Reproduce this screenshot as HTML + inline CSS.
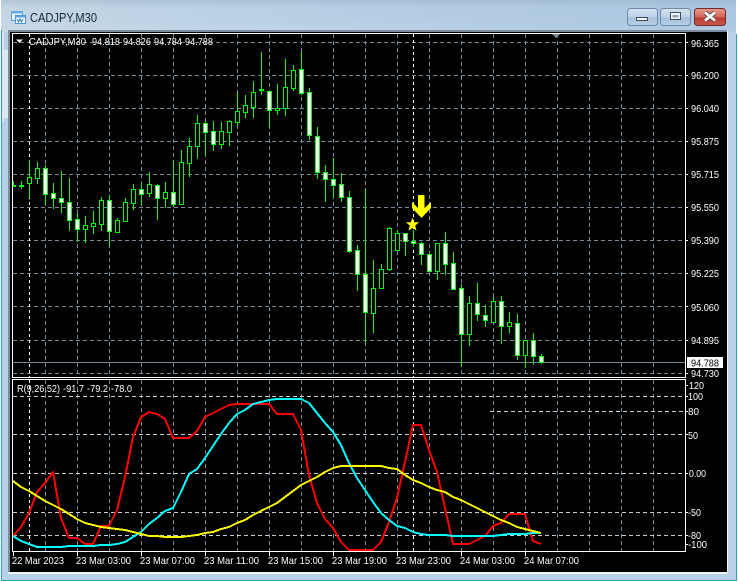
<!DOCTYPE html>
<html><head><meta charset="utf-8"><title>CADJPY,M30</title>
<style>
html,body{margin:0;padding:0;background:#fff;width:738px;height:582px;overflow:hidden}
svg{position:absolute;left:0;top:0;display:block}
text{font-family:"Liberation Sans",sans-serif;font-size:10.5px;fill:#fff}
</style></head><body>
<svg width="738" height="582" viewBox="0 0 738 582" xmlns="http://www.w3.org/2000/svg">
<defs>
<linearGradient id="tb" x1="0" x2="1" y1="0" y2="0"><stop offset="0" stop-color="#c6d6e4"/><stop offset=".25" stop-color="#bcd2e6"/><stop offset="1" stop-color="#aac6e0"/></linearGradient>
<linearGradient id="tv" x1="0" x2="0" y1="0" y2="1"><stop offset="0" stop-color="#8ca4ba" stop-opacity=".35"/><stop offset=".25" stop-color="#8ca4ba" stop-opacity="0"/><stop offset="1" stop-color="#fff" stop-opacity=".1"/></linearGradient>
<linearGradient id="bb" x1="0" x2="0" y1="0" y2="1"><stop offset="0" stop-color="#d4e2f0"/><stop offset=".5" stop-color="#bed2e6"/><stop offset=".55" stop-color="#a6c0da"/><stop offset="1" stop-color="#b8d0e8"/></linearGradient>
<linearGradient id="cb" x1="0" x2="0" y1="0" y2="1"><stop offset="0" stop-color="#e69c8c"/><stop offset=".5" stop-color="#d4665a"/><stop offset=".55" stop-color="#bc3c30"/><stop offset="1" stop-color="#c8584c"/></linearGradient>
<clipPath id="subclip"><rect x="13" y="380" width="672" height="171"/></clipPath>
</defs>

<!-- window chrome -->
<rect x="1" y="0" width="735" height="581" fill="#b8d0e8"/>
<rect x="1" y="0" width="735" height="32" fill="url(#tb)"/>
<rect x="1" y="0" width="735" height="32" fill="url(#tv)"/>
<rect x="1" y="580" width="735" height="1" fill="#2aa6b4"/>
<rect x="736" y="34" width="1" height="547" fill="#2aa6b4"/>
<rect x="1" y="30" width="1" height="551" fill="#2aa6b4"/>
<rect x="2" y="32" width="2" height="90" fill="#d6e2ee"/>
<rect x="3" y="50" width="5" height="68" fill="#dfe8f1"/>
<rect x="8" y="30" width="720" height="2" fill="#7c8c9c"/>
<rect x="8" y="30" width="2" height="544" fill="#7c8c9c"/>
<rect x="10" y="32" width="717" height="540" fill="#000"/>
<rect x="8" y="572" width="720" height="2" fill="#eef3f8"/>
<rect x="727" y="30" width="1" height="544" fill="#eef3f8"/>

<!-- title icon -->
<g>
<rect x="11.5" y="11.5" width="11" height="9" fill="#e6f2fb" stroke="#5aa0d8"/>
<rect x="11.5" y="11.5" width="11" height="2" fill="#6aaee2"/>
<rect x="15.5" y="15.5" width="10" height="8" fill="#f4f9fd" stroke="#4a94d0"/>
<rect x="15.5" y="15.5" width="10" height="2" fill="#58a4de"/>
<path d="M17 19l1.5 3 1.5-3 1.500 3 1.500-3" fill="none" stroke="#2f7fc0"/>
</g>
<text x="30" y="22" textLength="67" lengthAdjust="spacingAndGlyphs" style="font-size:13px;fill:#14263a">CADJPY,M30</text>

<!-- buttons -->
<rect x="627.500" y="8.500" width="30" height="17" rx="3" fill="url(#bb)" stroke="#6f8aa6"/>
<rect x="636.500" y="17.500" width="11" height="3" fill="#f4f8fc" stroke="#3e4c5c"/>
<rect x="660.500" y="8.500" width="30" height="17" rx="3" fill="url(#bb)" stroke="#6f8aa6"/>
<rect x="670.500" y="12.500" width="10" height="7" fill="#f4f8fc" stroke="#3e4c5c"/>
<rect x="672.500" y="15" width="6" height="2.500" fill="#8ea2b6"/>
<rect x="694.500" y="8.500" width="31" height="17" rx="3" fill="url(#cb)" stroke="#6e2a30"/>
<path d="M705 12.500l10 8M715 12.500l-10 8" stroke="#4a3a3e" stroke-width="4.500"/>
<path d="M705 12.500l10 8M715 12.500l-10 8" stroke="#fff" stroke-width="2.800"/>

<!-- top marker -->
<path d="M551 33h10l-5 5z" fill="#778899"/>

<!-- main grid -->
<g fill="none" stroke="#778899" stroke-width="1" stroke-dasharray="4 3" shape-rendering="crispEdges">
<path d="M13 42.500H685M13 75.500H685M13 108.500H685M13 141.500H685M13 174.500H685M13 207.500H685M13 240.500H685M13 273.500H685M13 306.500H685M13 340.500H685M13 373.500H685"/>
<path d="M45.500 34V377M77.500 34V377M109.500 34V377M141.500 34V377M173.500 34V377M205.500 34V377M237.500 34V377M269.500 34V377M301.500 34V377M333.500 34V377M365.500 34V377M397.500 34V377M429.500 34V377M461.500 34V377M493.500 34V377M525.500 34V377M557.500 34V377M589.500 34V377M621.500 34V377M653.500 34V377"/>
<path d="M45.500 380V551M77.500 380V551M109.500 380V551M141.500 380V551M173.500 380V551M205.500 380V551M237.500 380V551M269.500 380V551M301.500 380V551M333.500 380V551M365.500 380V551M397.500 380V551M429.500 380V551M461.500 380V551M493.500 380V551M525.500 380V551M557.500 380V551M589.500 380V551M621.500 380V551M653.500 380V551"/>
</g>
<g fill="none" stroke="#c4ccd4" stroke-width="1" stroke-dasharray="4 3" shape-rendering="crispEdges">
<path d="M13 396.500H685M13 434.500H685M13 473.500H685M13 512.500H685M13 535.500H685M490 411.500H685"/>
</g>
<g fill="none" stroke="#fff" stroke-width="1" stroke-dasharray="3 3" shape-rendering="crispEdges">
<path d="M29.500 34V377M413.500 34V377M29.500 380V551M413.500 380V551"/>
</g>

<!-- bid line -->
<path d="M13 362.500H685" stroke="#778899" stroke-width="1" shape-rendering="crispEdges"/>

<!-- candles -->
<g shape-rendering="crispEdges" stroke="#00ff00" stroke-width="1">
<path fill="none" d="M13.500 181V187M21.500 181V189M29.500 160V198M37.500 162V184M45.500 165V204M53.500 183V209M61.500 171V213M69.500 178V231M77.500 213V242M85.500 216V243M93.500 211V234M101.500 197V231M109.500 195V246M117.500 218V232M125.500 198V221M133.500 184V210M141.500 183V206M149.500 172V197M157.500 184V220M165.500 182V208M173.500 160V207M181.500 150V204M189.500 138V177M197.500 115V159M205.500 121V156M213.500 121V151M221.500 122V149M229.500 120V146M237.500 93V126M245.500 95V118M253.500 81V118M261.500 52V95M269.500 91V128M277.500 84V115M285.500 59V116M293.500 65V91M301.500 52V95M309.500 88V140M317.500 127V179M325.500 165V202M333.500 158V198M341.500 173V202M349.500 191V253M357.500 245V291M365.500 189V343M373.500 260V333M381.500 264V289M389.500 227V271M397.500 230V251M405.500 233V256M413.500 230V247M421.500 242V265M429.500 254V272M437.500 243V280M445.500 232V275M453.500 252V289M461.500 284V366M469.500 296V346M477.500 283V321M485.500 305V327M493.500 297V323M501.500 296V344M509.500 312V333M517.500 314V360M525.500 340V368M533.500 333V365M541.500 354V364"/>
<path fill="#000" d="M27.500 177.500h4v6h-4zM35.500 168.500h4v10h-4zM83.500 225.500h4v4h-4zM91.500 223.500h4v3h-4zM99.500 200.500h4v24h-4zM115.500 220.500h4v12h-4zM123.500 202.500h4v19h-4zM131.500 189.500h4v14h-4zM147.500 184.500h4v9h-4zM163.500 192.500h4v6h-4zM179.500 162.500h4v42h-4zM187.500 146.500h4v17h-4zM195.500 123.500h4v23h-4zM219.500 131.500h4v13h-4zM227.500 121.500h4v11h-4zM235.500 111.500h4v11h-4zM243.500 105.500h4v7h-4zM251.500 92.500h4v15h-4zM275.500 108.500h4v2h-4zM283.500 87.500h4v21h-4zM291.500 70.500h4v18h-4zM371.500 288.500h4v25h-4zM379.500 269.500h4v19h-4zM387.500 228.500h4v41h-4zM395.500 233.500h4v17h-4zM435.500 243.500h4v28h-4zM467.500 303.500h4v31h-4zM491.500 301.500h4v21h-4zM507.500 322.500h4v4h-4zM523.500 340.500h4v15h-4z"/>
<path fill="#fff" d="M13.500 185.500h2v1h-2zM19.500 185.500h4v1h-4zM43.500 168.500h4v26h-4zM51.500 193.500h4v5h-4zM59.500 198.500h4v4h-4zM67.500 202.500h4v18h-4zM75.500 219.500h4v10h-4zM107.500 200.500h4v31h-4zM139.500 189.500h4v5h-4zM155.500 185.500h4v13h-4zM171.500 192.500h4v12h-4zM203.500 123.500h4v9h-4zM211.500 131.500h4v13h-4zM259.500 89.500h4v1h-4zM267.500 91.500h4v19h-4zM299.500 69.500h4v24h-4zM307.500 92.500h4v43h-4zM315.500 136.500h4v36h-4zM323.500 172.500h4v7h-4zM331.500 179.500h4v6h-4zM339.500 184.500h4v13h-4zM347.500 197.500h4v54h-4zM355.500 250.500h4v24h-4zM363.500 274.500h4v38h-4zM403.500 233.500h4v8h-4zM411.500 241.500h4v2h-4zM419.500 243.500h4v11h-4zM427.500 254.500h4v17h-4zM443.500 243.500h4v21h-4zM451.500 263.500h4v26h-4zM459.500 288.500h4v46h-4zM475.500 303.500h4v11h-4zM483.500 315.500h4v5h-4zM499.500 301.500h4v25h-4zM515.500 323.500h4v32h-4zM531.500 340.500h4v16h-4zM539.500 356.500h4v6h-4z"/>
</g>

<!-- arrow and star -->
<polygon points="418,195 424.500,195 424.500,208 431,202 431,208 421.500,218 412,208 412,202 418,208" fill="#ffff00"/>
<polygon points="412.500,217.500 414.200,222.200 419,222.200 415.200,225.600 416.500,230.500 412.500,228 408.500,230.500 409.800,225.600 406,222.200 410.800,222.200" fill="#ffff00"/>

<!-- oscillator lines -->
<g fill="none" stroke-width="2" clip-path="url(#subclip)" shape-rendering="crispEdges" stroke-linejoin="round">
<polyline stroke="#ff0000" points="13,536 21,527 29,513 37,492 45,483 53,472 61,518 69,538 77,538 85,544 93,544 101,526 109,526 117,510 125,477 133,437 141,417 149,412 157,414 165,419 173,438 181,438 189,438 197,431 205,417 213,413 221,409 229,405 237,404 245,404 253,404 261,404 269,404 277,414 285,414 293,414 301,430 309,475 317,503 325,519 333,528 341,542 349,550 357,550 365,550 373,550 381,542 389,522 397,498 405,462 413,425 421,425 429,450 437,472 445,508 453,544 461,544 469,544 477,540 485,536 493,526 501,523 509,514 517,514 525,514 533,541 541,544"/>
<polyline stroke="#00ffff" points="13,536 21,541 29,544 37,547 45,547 53,547 61,547 69,546 77,546 85,546 93,546 101,545 109,545 117,544 125,542 133,537 141,532 149,524 157,518 165,511 173,508 181,492 189,474 197,469 205,458 213,446 221,434 229,423 237,414 245,410 253,404 261,402 269,400 277,399 285,399 293,399 301,399 309,403 317,413 325,423 333,432 341,445 349,463 357,478 365,490 373,502 381,513 389,520 397,526 405,528 413,532 421,534 429,535 437,535 445,535 453,536 461,536 469,536 477,536 485,536 493,536 501,535 509,534 517,534 525,534 533,533 541,533"/>
<polyline stroke="#ffff00" points="13,481 21,487 29,491 37,496 45,501 53,505 61,509 69,514 77,519 85,523 93,525 101,527 109,528 117,529 125,530 133,532 141,534 149,536 157,536 165,537 173,537 181,537 189,536 197,535 205,533 213,532 221,529 229,527 237,523 245,520 253,515 261,511 269,507 277,503 285,497 293,491 301,485 309,481 317,477 325,472 333,468 341,466 349,466 357,466 365,466 373,466 381,466 389,468 397,469 405,475 413,480 421,483 429,487 437,490 445,492 453,497 461,500 469,504 477,508 485,512 493,516 501,520 509,523 517,527 525,529 533,531 541,533"/>
</g>

<!-- frame -->
<g fill="none" stroke="#fff" stroke-width="1" shape-rendering="crispEdges">
<path d="M12.500 377.500V33.500H685.500V377.500H12.500"/>
<path d="M12.500 551.500V379.500H685.500V551.500H12.500"/>
<path d="M686 42.500h2M686 75.500h2M686 108.500h2M686 141.500h2M686 174.500h2M686 207.500h2M686 240.500h2M686 273.500h2M686 306.500h2M686 340.500h2M686 373.500h2"/>
<path d="M686 385.500h2M686 396.500h2M686 411.500h2M686 434.500h2M686 473.500h2M686 512.500h2M686 535.500h2M686 544.500h2"/>
<path d="M13.500 552V556M77.500 552V556M141.500 552V556M205.500 552V556M269.500 552V556M333.500 552V556M397.500 552V556M461.500 552V556M525.500 552V556"/>
</g>

<!-- chart header -->
<path d="M16 39.500h7l-3.500 3.500z" fill="#fff"/>
<text x="29" y="45" textLength="57" lengthAdjust="spacingAndGlyphs">CADJPY,M30</text>
<text x="92" y="45" textLength="28" lengthAdjust="spacingAndGlyphs">94.818</text>
<text x="123" y="45" textLength="28" lengthAdjust="spacingAndGlyphs">94.826</text>
<text x="154" y="45" textLength="28" lengthAdjust="spacingAndGlyphs">94.784</text>
<text x="185" y="45" textLength="28" lengthAdjust="spacingAndGlyphs">94.788</text>

<text x="17" y="392" textLength="43" lengthAdjust="spacingAndGlyphs">R(9,26,52)</text>
<text x="63" y="392" textLength="21" lengthAdjust="spacingAndGlyphs">-91.7</text>
<text x="87" y="392" textLength="21" lengthAdjust="spacingAndGlyphs">-79.2</text>
<text x="111" y="392" textLength="21" lengthAdjust="spacingAndGlyphs">-78.0</text>

<!-- price scale -->
<g>
<text x="691" y="47" textLength="28" lengthAdjust="spacingAndGlyphs">96.365</text>
<text x="691" y="79" textLength="28" lengthAdjust="spacingAndGlyphs">96.200</text>
<text x="691" y="112" textLength="28" lengthAdjust="spacingAndGlyphs">96.040</text>
<text x="691" y="145" textLength="28" lengthAdjust="spacingAndGlyphs">95.875</text>
<text x="691" y="178" textLength="28" lengthAdjust="spacingAndGlyphs">95.715</text>
<text x="691" y="211" textLength="28" lengthAdjust="spacingAndGlyphs">95.550</text>
<text x="691" y="244" textLength="28" lengthAdjust="spacingAndGlyphs">95.390</text>
<text x="691" y="277" textLength="28" lengthAdjust="spacingAndGlyphs">95.225</text>
<text x="691" y="311" textLength="28" lengthAdjust="spacingAndGlyphs">95.060</text>
<text x="691" y="344" textLength="28" lengthAdjust="spacingAndGlyphs">94.895</text>
<text x="691" y="377" textLength="28" lengthAdjust="spacingAndGlyphs">94.730</text>
</g>
<rect x="687" y="357" width="36" height="11" fill="#fff"/>
<text x="691" y="366.500" textLength="28" lengthAdjust="spacingAndGlyphs" style="fill:#000">94.788</text>

<!-- oscillator scale -->
<text x="689" y="389" textLength="15" lengthAdjust="spacingAndGlyphs">120</text>
<text x="688" y="400" textLength="15" lengthAdjust="spacingAndGlyphs">100</text>
<text x="688" y="415" textLength="11" lengthAdjust="spacingAndGlyphs">80</text>
<text x="688" y="439" textLength="10" lengthAdjust="spacingAndGlyphs">50</text>
<text x="689" y="477" textLength="17" lengthAdjust="spacingAndGlyphs">0.00</text>
<text x="688" y="516" textLength="13" lengthAdjust="spacingAndGlyphs">-50</text>
<text x="688" y="539" textLength="13" lengthAdjust="spacingAndGlyphs">-80</text>
<text x="688" y="548" textLength="19" lengthAdjust="spacingAndGlyphs">-100</text>

<!-- time scale -->
<text x="12" y="564" textLength="52" lengthAdjust="spacingAndGlyphs">22 Mar 2023</text>
<text x="76" y="564" textLength="55" lengthAdjust="spacingAndGlyphs">23 Mar 03:00</text>
<text x="140" y="564" textLength="55" lengthAdjust="spacingAndGlyphs">23 Mar 07:00</text>
<text x="204" y="564" textLength="55" lengthAdjust="spacingAndGlyphs">23 Mar 11:00</text>
<text x="268" y="564" textLength="55" lengthAdjust="spacingAndGlyphs">23 Mar 15:00</text>
<text x="332" y="564" textLength="55" lengthAdjust="spacingAndGlyphs">23 Mar 19:00</text>
<text x="396" y="564" textLength="55" lengthAdjust="spacingAndGlyphs">23 Mar 23:00</text>
<text x="460" y="564" textLength="55" lengthAdjust="spacingAndGlyphs">24 Mar 03:00</text>
<text x="524" y="564" textLength="55" lengthAdjust="spacingAndGlyphs">24 Mar 07:00</text>
</svg>
</body></html>
